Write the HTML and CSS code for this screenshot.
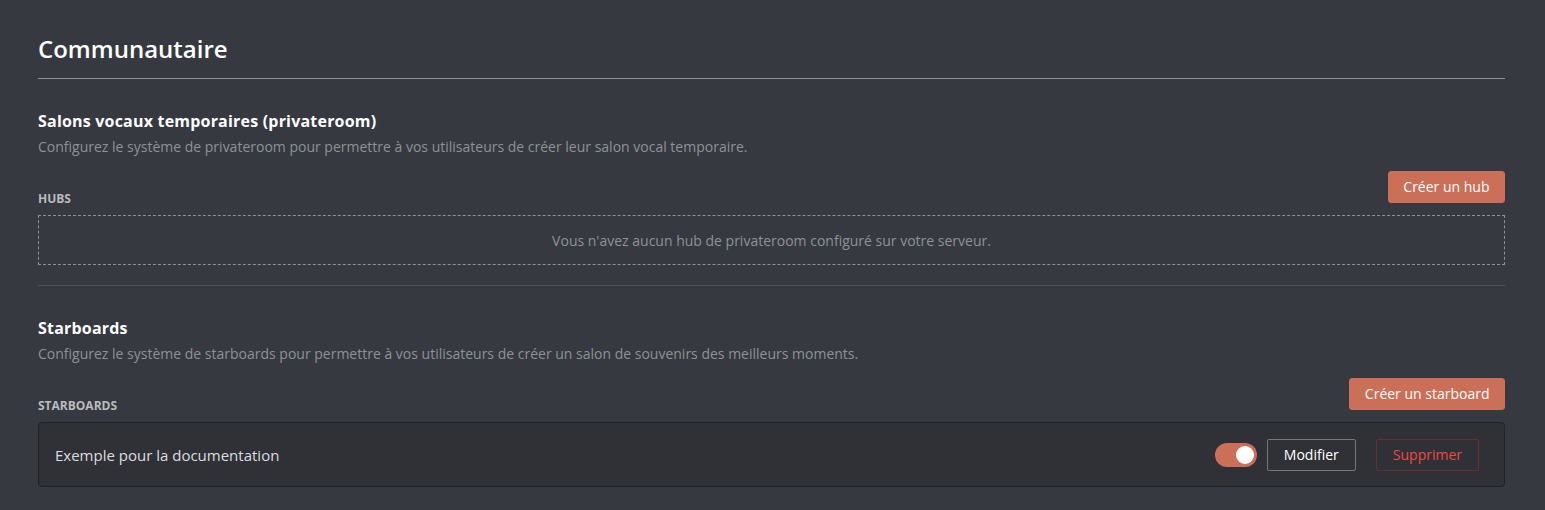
FILE: index.html
```html
<!DOCTYPE html>
<html lang="fr">
<head>
<meta charset="utf-8">
<title>Communautaire</title>
<link rel="stylesheet" href="styles.css">
</head>
<body>
<main class="page">
  <h1 class="page-title">Communautaire</h1>

  <section class="section">
    <h2 class="section-title">Salons vocaux temporaires (privateroom)</h2>
    <p class="section-desc">Configurez le système de privateroom pour permettre à vos utilisateurs de créer leur salon vocal temporaire.</p>
    <div class="list-header">
      <span class="list-label">Hubs</span>
      <button class="btn btn-primary">Créer un hub</button>
    </div>
    <div class="empty-box">Vous n'avez aucun hub de privateroom configuré sur votre serveur.</div>
  </section>

  <hr class="separator">

  <section class="section">
    <h2 class="section-title">Starboards</h2>
    <p class="section-desc">Configurez le système de starboards pour permettre à vos utilisateurs de créer un salon de souvenirs des meilleurs moments.</p>
    <div class="list-header">
      <span class="list-label">Starboards</span>
      <button class="btn btn-primary">Créer un starboard</button>
    </div>
    <div class="item-card">
      <span class="item-name">Exemple pour la documentation</span>
      <div class="item-actions">
        <span class="toggle on"><span class="knob"></span></span>
        <button class="btn btn-outline">Modifier</button>
        <button class="btn btn-danger">Supprimer</button>
      </div>
    </div>
  </section>
</main>
</body>
</html>
```

FILE: styles.css
```css
html, body {
  margin: 0;
  padding: 0;
  background: #36393f;
}

body {
  font-family: "Open Sans", "Noto Sans", sans-serif;
  color: #dcddde;
}

.page {
  padding: 33px 40px 0 38px;
}

.page-title {
  margin: 0;
  font-size: 24px;
  line-height: 32px;
  font-weight: 600;
  color: #ffffff;
  padding-bottom: 13px;
  border-bottom: 1px solid #8e9297;
}

.section {
  padding-top: 32px;
}

.section-title {
  margin: 0;
  font-size: 16px;
  line-height: 20px;
  font-weight: 700;
  letter-spacing: 0.2px;
  color: #ffffff;
}

.section-desc {
  margin: 6px 0 0;
  font-size: 14px;
  line-height: 20px;
  color: #8e9297;
}

.list-header {
  display: flex;
  justify-content: space-between;
  align-items: flex-end;
  margin-top: 14px;
}

.list-label {
  font-size: 12px;
  line-height: 14px;
  font-weight: 700;
  text-transform: uppercase;
  color: #b9bbbe;
  margin-bottom: -3px;
}

.btn {
  font-family: inherit;
  font-size: 14px;
  line-height: 16px;
  height: 32px;
  padding: 0 16px;
  border-radius: 3px;
  cursor: pointer;
  background: transparent;
  border: 1px solid transparent;
}

.btn-primary {
  background: #cb6f58;
  color: #ffffff;
  border-color: #cb6f58;
  padding: 0 14.5px;
}

.btn-outline {
  border-color: #72767d;
  color: #ffffff;
  border-radius: 2px;
}

.btn-danger {
  border-color: #6b2d30;
  color: #f04747;
  border-radius: 2px;
  margin-left: 10px;
}

.empty-box {
  margin-top: 12px;
  height: 48px;
  border: 1px dashed #8e9297;
  display: flex;
  align-items: center;
  justify-content: center;
  font-size: 14px;
  color: #8e9297;
}

.separator {
  margin: 20px 0 0;
  border: 0;
  border-top: 1px solid #4f545c;
}

.item-card {
  margin-top: 12px;
  height: 63px;
  background: #2f3136;
  border: 1px solid #202225;
  border-radius: 4px;
  display: flex;
  align-items: center;
  justify-content: space-between;
  padding: 0 25px 0 16px;
}

.item-name {
  font-size: 15px;
  color: #dcddde;
}

.item-actions {
  display: flex;
  align-items: center;
  gap: 10px;
}

.toggle {
  width: 42px;
  height: 24px;
  border-radius: 12px;
  background: #72767d;
  display: flex;
  align-items: center;
  padding: 0 3px;
  box-sizing: border-box;
}

.toggle.on {
  background: #cb6f58;
  justify-content: flex-end;
}

.knob {
  width: 18px;
  height: 18px;
  border-radius: 50%;
  background: #ffffff;
}
```
